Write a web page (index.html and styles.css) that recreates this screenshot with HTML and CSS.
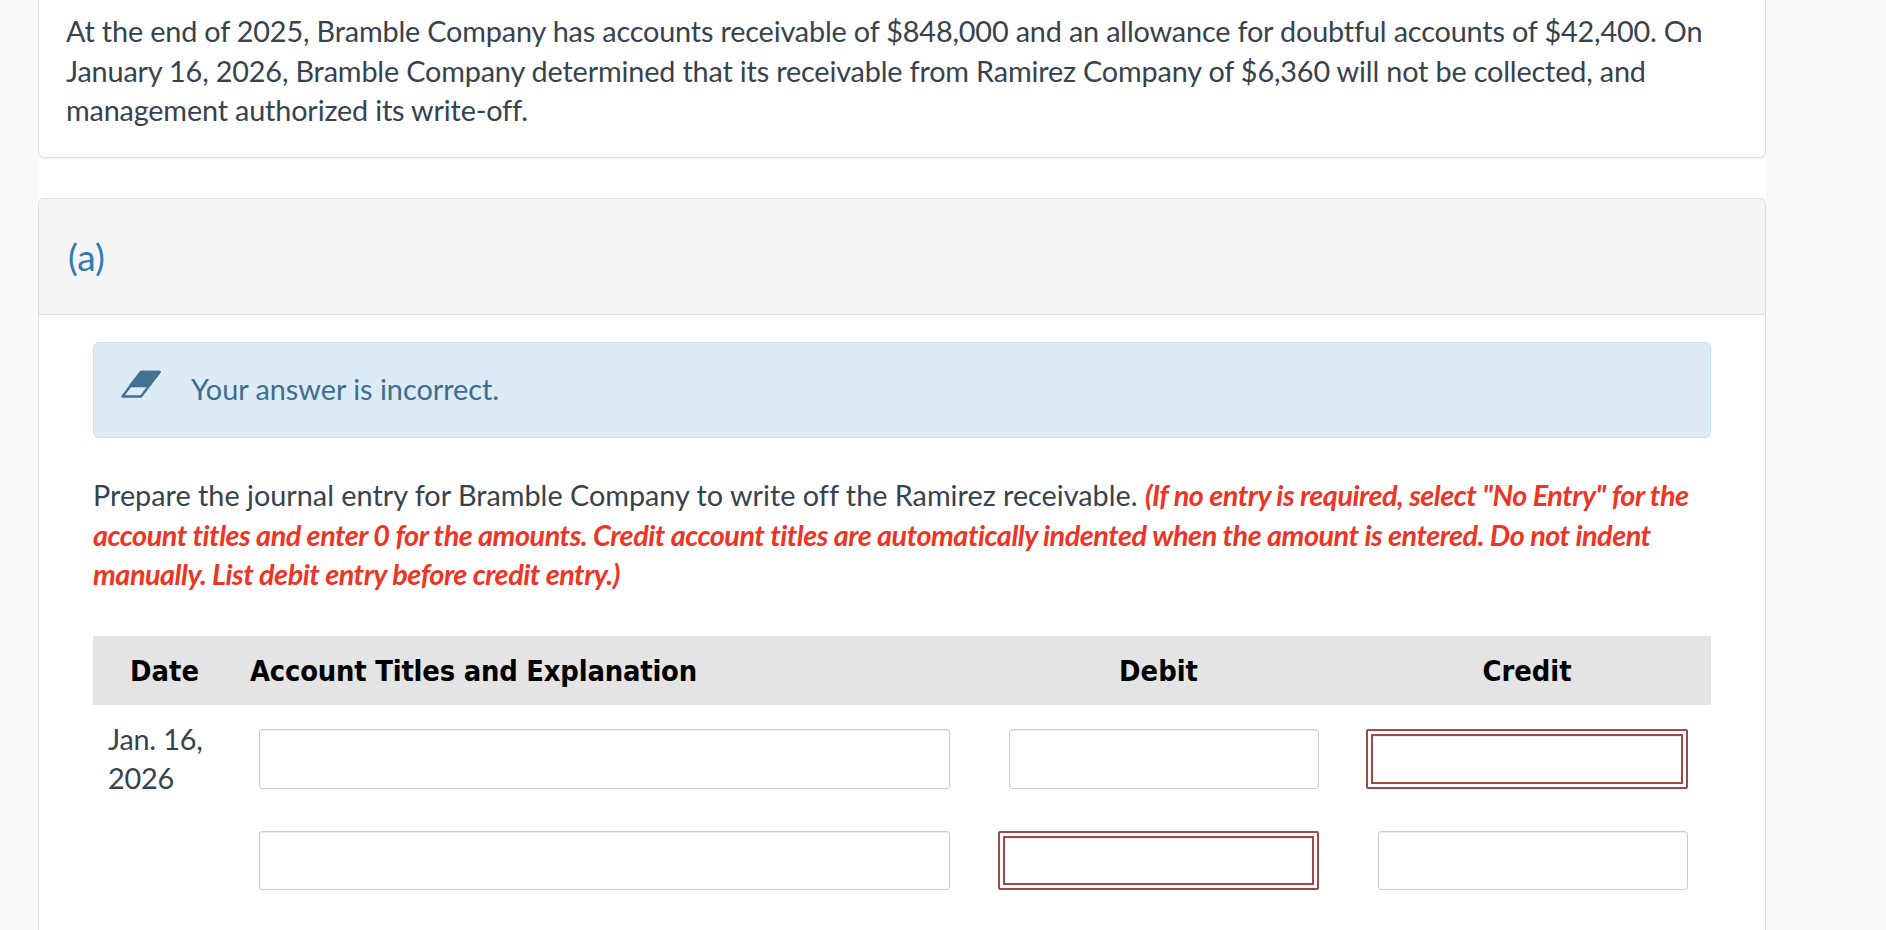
FILE: index.html

```html
<!DOCTYPE html>
<html lang="en">
<head>
  <meta charset="UTF-8" />
  <title>Question</title>
  <link rel="stylesheet" href="styles.css">
</head>
<body>

  <div class="page">

    <!-- Question text -->
    <div class="card">
      <p>At the end of 2025, Bramble Company has accounts receivable of $848,000 and an allowance for doubtful accounts of $42,400. On January 16, 2026, Bramble Company determined that its receivable from Ramirez Company of $6,360 will not be collected, and management authorized its write-off.</p>
    </div>

    <!-- Part (a) -->
    <div class="panel">
      <div class="panel-head">(a)</div>

      <div class="panel-body">
        <div class="alert">
          <svg class="alert-icon" width="40" height="28" viewBox="0 0 40 28">
            <polygon points="20,2 38.500,2 20,26.500 1.500,26.500" fill="none" stroke="#44718f" stroke-width="2.400" stroke-linejoin="round"/>
            <polygon points="20,2 38.500,2 27.500,16 9,16" fill="#44718f" stroke="#44718f" stroke-width="2.400" stroke-linejoin="round"/>
          </svg>
          <span>Your answer is incorrect.</span>
        </div>

        <p class="prompt">Prepare the journal entry for Bramble Company to write off the Ramirez receivable. <em>(If no entry is required, select "No Entry" for the account titles and enter 0 for the amounts. Credit account titles are automatically indented when the amount is entered. Do not indent manually. List debit entry before credit entry.)</em></p>

        <div class="entry-head">
          <div class="col-date">Date</div>
          <div class="col-account">Account Titles and Explanation</div>
          <div class="col-debit">Debit</div>
          <div class="col-credit">Credit</div>
        </div>

        <div class="entry-row first">
          <div class="cell-date">Jan. 16,<br>2026</div>
          <div class="cell-account"><input type="text"></div>
          <div class="cell-debit"><input type="text"></div>
          <div class="cell-credit"><div class="has-error"><input type="text"></div></div>
        </div>

        <div class="entry-row">
          <div class="cell-date"></div>
          <div class="cell-account"><input type="text"></div>
          <div class="cell-debit"><div class="has-error"><input type="text"></div></div>
          <div class="cell-credit"><input type="text"></div>
        </div>
      </div>
    </div>

  </div>

</body>
</html>
```

FILE: styles.css

```css
* {
  box-sizing: border-box;
}

html,
body {
  height: 100%;
}

body {
  margin: 0;
  background: #f9f9f9;
  font-family: 'Lato', sans-serif;
  font-size: 28.8px;
  line-height: 39.6px;
  color: #36424e;
  font-variant-ligatures: none;
  overflow: hidden;
}

.page {
  width: 1728px;
  height: 930px;
  margin-left: 38px;
  background: #fff;
  overflow: hidden;
}

/* Question card */
.card {
  height: 158px;
  padding: 12px 27px 0 27px;
  border: 1px solid #ddd;
  border-top: none;
  border-radius: 0 0 6px 6px;
  box-shadow: 0 1px 2px rgba(0, 0, 0, 0.06);
  letter-spacing: -0.16px;
}

.card p {
  margin: 0;
}

/* Part panel */
.panel {
  margin-top: 40px;
  height: 732px;
  border: 1px solid #ddd;
  border-bottom: none;
  border-radius: 6px 6px 0 0;
}

.panel-head {
  height: 116px;
  padding: 37px 27px 0 29px;
  background: #f5f5f5;
  border-bottom: 1px solid #ddd;
  border-radius: 6px 6px 0 0;
  color: #337ab7;
  font-size: 37px;
  line-height: 42px;
}

.panel-body {
  padding: 27px 54px 0;
}

.alert {
  display: flex;
  align-items: center;
  height: 96px;
  padding-left: 27px;
  background: #ddebf6;
  border: 1px solid #c6e3ee;
  border-radius: 6px;
  color: #3c6e8f;
}

.alert-icon {
  margin: -12px 30px 0 0;
  flex-shrink: 0;
}

.prompt {
  margin: 38px 0 0;
}

.prompt em {
  color: #ee3424;
  font-weight: 700;
  letter-spacing: -0.48px;
}

/* Journal entry */
.entry-head,
.entry-row {
  display: grid;
  grid-template-columns: 157px 748px 368px 345px;
}

.entry-head {
  height: 69px;
  margin-top: 41px;
  align-items: center;
  background: #e4e4e4;
  color: #000;
  font-family: 'DejaVu Sans', sans-serif;
  font-stretch: condensed;
  font-weight: 700;
  padding-top: 3px;
}

.col-date {
  padding-left: 37px;
}

.col-account {
  letter-spacing: -0.2px;
}

.col-debit {
  padding-right: 47px;
  text-align: center;
}

.col-credit {
  padding-right: 23px;
  text-align: center;
}

.entry-row {
  height: 102px;
}

.entry-row.first {
  padding-top: 24px;
  height: 126px;
}

.cell-date {
  padding-left: 15px;
  margin-top: -9px;
  letter-spacing: -0.2px;
}

.cell-account {
  padding: 0 48px 0 9px;
}

.cell-debit {
  padding-right: 47px;
  display: flex;
  justify-content: flex-end;
  align-items: flex-start;
}

.cell-credit {
  padding-right: 23px;
  display: flex;
  justify-content: flex-end;
  align-items: flex-start;
}

input {
  display: block;
  width: 100%;
  height: 59px;
  padding: 0 14px;
  border: 1px solid #ccc;
  border-radius: 3px;
  background: #fff;
  box-shadow: inset 0 1px 1px rgba(0, 0, 0, 0.075);
  font-size: 24px;
}

.entry-row.first input {
  height: 60px;
}

.cell-debit > input,
.cell-credit > input {
  width: 310px;
}

.has-error {
  width: 322px;
  height: 59px;
  padding: 3px;
  border: 2px solid #a04a48;
  border-radius: 2px;
}

.entry-row.first .has-error {
  height: 60px;
}

.has-error input,
.entry-row.first .has-error input {
  height: 100%;
  border: 2px solid #a04a48;
  border-radius: 0;
}
```
